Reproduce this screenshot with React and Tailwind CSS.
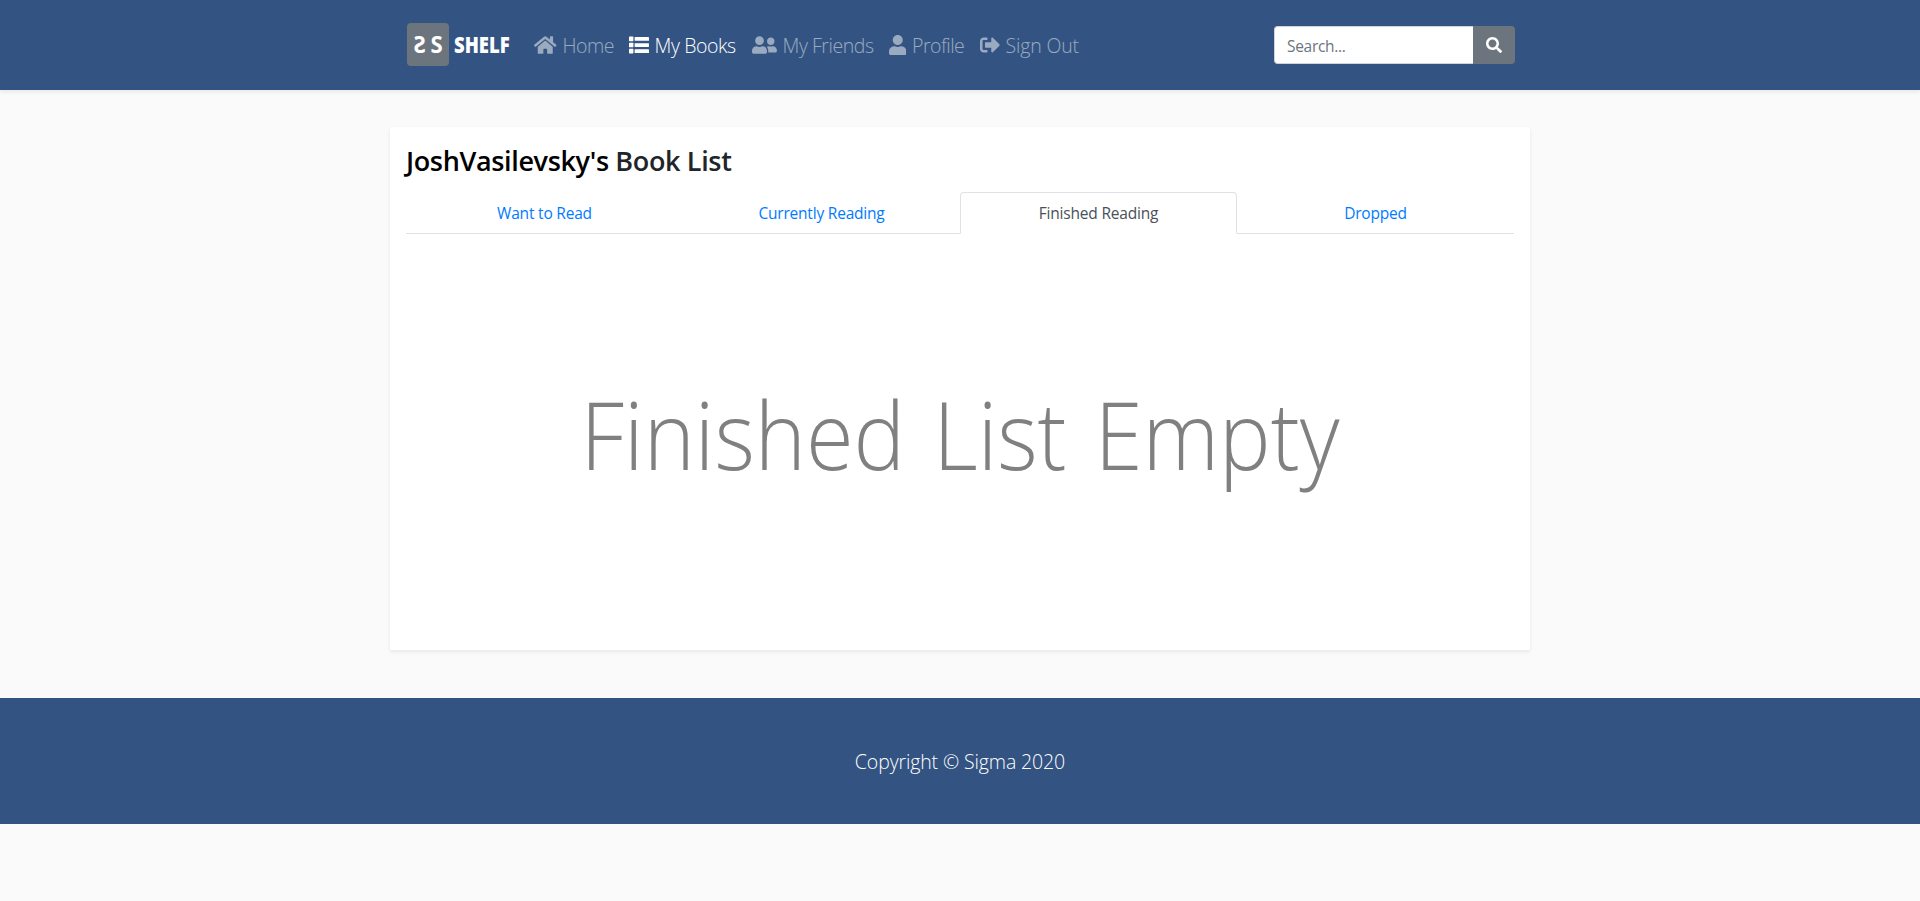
import { FaHome, FaUserFriends, FaUser, FaSignOutAlt, FaSearch } from "react-icons/fa";

function Logo() {
  return (
    <a className="flex items-center pb-px" aria-label="SS Shelf">
      <span className="flex h-[43px] w-[42px] items-center justify-center gap-[4px] rounded bg-[#6c757d] pb-px text-[24px] font-bold leading-none text-white font-['Open_Sans',sans-serif]">
        <span className="inline-block -scale-x-[0.92]">S</span>
        <span className="inline-block scale-x-[0.92]">S</span>
      </span>
      <span className="ml-[5px] inline-block w-[56px] origin-left scale-x-[0.84] pb-[2px] text-[22px] font-extrabold leading-none text-white font-['Open_Sans',sans-serif]">
        SHELF
      </span>
    </a>
  );
}

function ListIcon({ className }) {
  return (
    <svg viewBox="0 0 20 20" fill="currentColor" className={className}>
      <rect x="0" y="1.6" width="4.4" height="4.6" rx="0.6" />
      <rect x="0" y="7.7" width="4.4" height="4.6" rx="0.6" />
      <rect x="0" y="13.8" width="4.4" height="4.6" rx="0.6" />
      <rect x="5.6" y="2.1" width="14.4" height="3.7" rx="0.6" />
      <rect x="5.6" y="8.2" width="14.4" height="3.7" rx="0.6" />
      <rect x="5.6" y="14.3" width="14.4" height="3.7" rx="0.6" />
    </svg>
  );
}

function NavItem({ icon: Icon, iconClass, textClass, active, children }) {
  return (
    <a className={`flex items-center whitespace-nowrap ${active ? "text-white" : "text-white/50"}`}>
      <Icon className={`h-5 shrink-0 ${iconClass}`} />
      <span className={`ml-[6px] pt-[2px] text-[19.5px] font-light leading-[30px] ${textClass}`}>{children}</span>
    </a>
  );
}

function Tab({ active, children }) {
  return (
    <a
      className={`-mb-px flex h-[42px] w-[277px] items-center justify-center rounded-t border pt-[2px] text-[15.5px] tracking-[-0.2px] ${
        active ? "border-[#dee2e6] border-b-white bg-white text-[#495057]" : "border-transparent text-[#007bff]"
      }`}
    >
      {children}
    </a>
  );
}

export default function App() {
  return (
    <div className="min-h-[901px] bg-[#fafafa] font-['Open_Sans','Noto_Sans',sans-serif] text-[#212529]">
      <nav className="h-[90px] bg-[#335482] shadow-[0_2px_4px_rgba(0,0,0,0.075)]">
        <div className="mx-auto flex h-full w-[1110px] items-center pl-[2px]">
          <Logo />
          <div className="ml-[24px] flex items-center gap-[15px]">
            <NavItem icon={FaHome} iconClass="w-[22.5px]" textClass="w-[51px] tracking-[-0.5px]">Home</NavItem>
            <NavItem icon={ListIcon} iconClass="w-5" textClass="w-[82px] tracking-[-0.4px]" active>My Books</NavItem>
            <NavItem icon={FaUserFriends} iconClass="w-[25px]" textClass="w-[91px] tracking-[-0.45px]">My Friends</NavItem>
            <NavItem icon={FaUser} iconClass="w-[17.5px]" textClass="w-[52.5px] tracking-[-0.5px]">Profile</NavItem>
            <NavItem icon={FaSignOutAlt} iconClass="w-5" textClass="w-[75px] tracking-[-0.15px]">Sign Out</NavItem>
          </div>
          <form className="ml-auto flex h-[38px] w-[241px]">
            <input
              placeholder="Search..."
              className="w-[199px] rounded-l border border-r-0 border-[#ced4da] bg-white px-3 pt-[3px] text-[15.5px] tracking-[-0.3px] placeholder:text-[#6c757d]"
            />
            <button type="button" className="flex w-[42px] items-center justify-center rounded-r bg-[#6c757d] text-white">
              <FaSearch className="h-4 w-4" />
            </button>
          </form>
        </div>
      </nav>
      <main className="mx-auto mt-[37px] h-[523px] w-[1140px] bg-white px-4 pt-4 shadow-[0_2px_4px_rgba(0,0,0,0.075)]">
        <h3 className="h-[49px] pt-px text-[27px] font-semibold leading-[34px] tracking-[-0.35px]">
          <span className="text-black">JoshVasilevsky's</span> Book List
        </h3>
        <div className="flex border-b border-[#dee2e6]">
          <Tab>Want to Read</Tab>
          <Tab>Currently Reading</Tab>
          <Tab active>Finished Reading</Tab>
          <Tab>Dropped</Tab>
        </div>
        <div className="flex h-[400px] scale-x-[0.922] items-center justify-center whitespace-nowrap text-[94px] font-light leading-none text-[#808080] [word-spacing:6px]">
          Finished List Empty
        </div>
      </main>
      <footer className="mt-12 flex h-[126px] items-center justify-center bg-[#335482] pt-[2px] text-[19.5px] font-light tracking-[-0.12px] text-white">
        <p>Copyright © Sigma 2020</p>
      </footer>
    </div>
  );
}
